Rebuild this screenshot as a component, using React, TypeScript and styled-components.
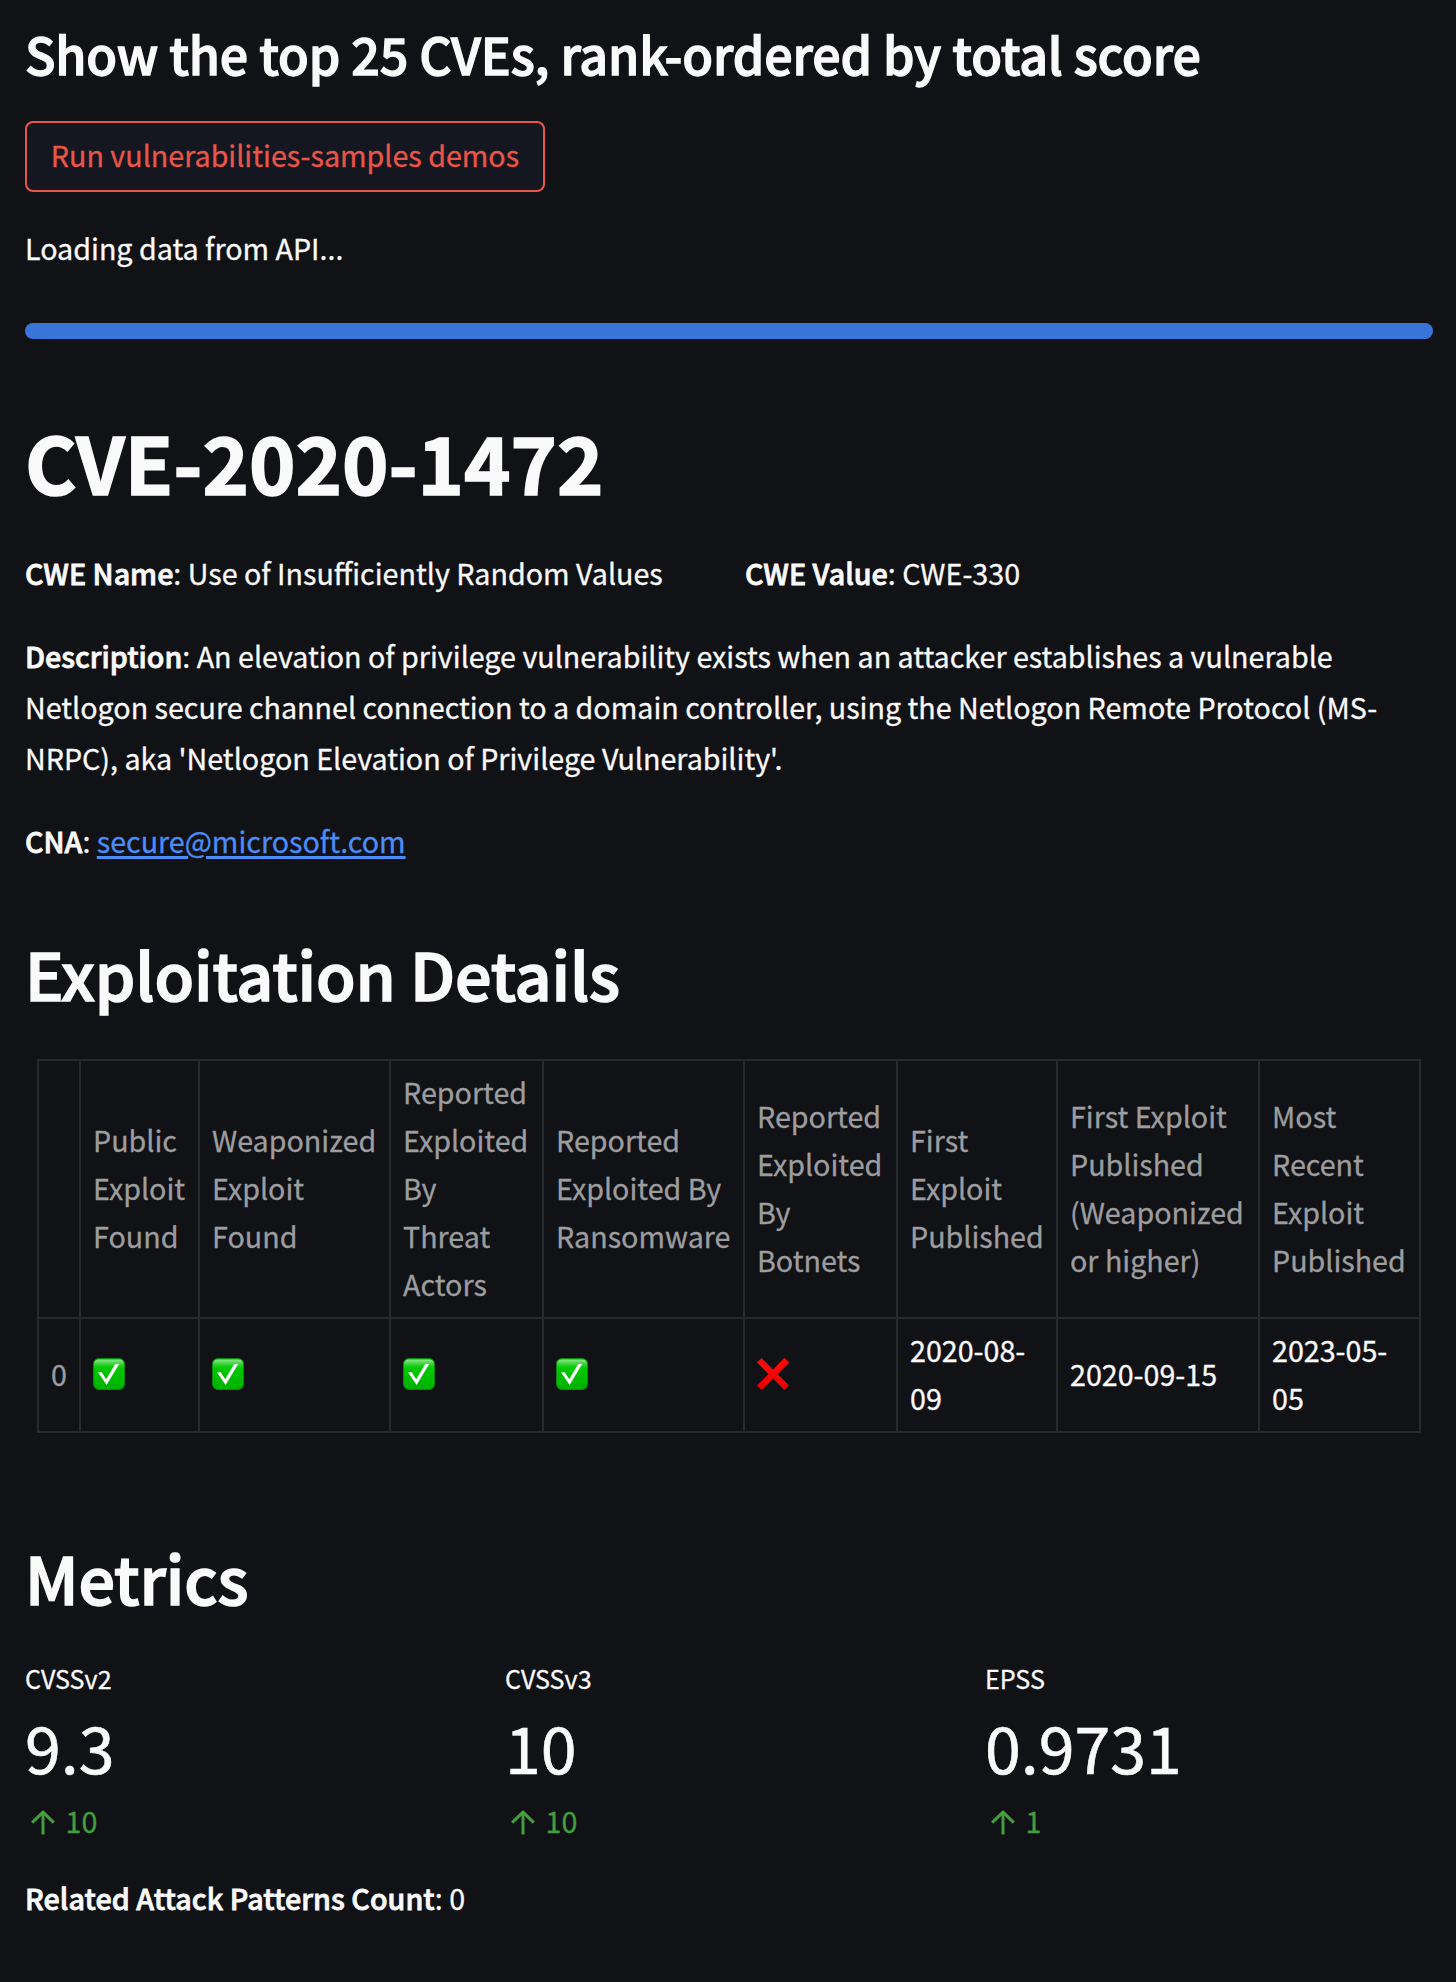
import React from 'react';
import styled, { createGlobalStyle } from 'styled-components';

const color = {
  background: '#111216',
  surface: '#14171f',
  text: '#fafafa',
  faded: '#9d9d9f',
  line: '#28292d',
  primary: '#ea5549',
  bar: '#3975d8',
  link: '#4b8df8',
  up: '#439f3e',
};

const GlobalStyle = createGlobalStyle`
  *, *::before, *::after { box-sizing: border-box; }
  body {
    margin: 0;
    background: ${color.background};
    color: ${color.text};
    font-family: "Noto Sans CJK SC", "Noto Sans", sans-serif;
    font-size: 28.67px;
    line-height: 51.2px;
    -webkit-text-stroke-width: 0.3px;
  }
`;

const Page = styled.main`
  display: flex;
  flex-direction: column;
  width: 1456px;
  min-height: 1982px;
  padding: 20px 23px 0 25px;
`;

const PageHeading = styled.h3`
  margin: 0 0 34px;
  font-size: 50.15px;
  font-weight: 500;
  line-height: 67px;
  letter-spacing: -0.165px;
  -webkit-text-stroke-width: 1.3px;
`;

const RunButton = styled.button`
  align-self: flex-start;
  width: 520px;
  height: 71px;
  padding: 6px 0 10px;
  border: 2px solid ${color.primary};
  border-radius: 8px;
  background: ${color.surface};
  color: ${color.primary};
  font: inherit;
  line-height: 51px;
  white-space: nowrap;
`;

const Paragraph = styled.p<{ $top?: number }>`
  margin: ${({ $top = 0 }) => $top}px 0 0;
`;

const Label = styled.strong<{ $tracking?: number }>`
  font-weight: 500;
  letter-spacing: ${({ $tracking = 0 }) => $tracking}px;
  -webkit-text-stroke-width: 0.8px;
`;

const ProgressTrack = styled.div`
  height: 16px;
  margin-top: 50px;
  border-radius: 8px;
  background: ${color.bar};
`;

const Title = styled.h1`
  margin: 69px 0 33px;
  font-size: 78.8px;
  font-weight: 700;
  line-height: 106px;
  -webkit-text-stroke-width: 1.6px;
`;

const SectionHeading = styled.h2<{ $top: number; $bottom: number }>`
  margin: ${({ $top }) => $top}px 0 ${({ $bottom }) => $bottom}px;
  font-size: 64.5px;
  font-weight: 500;
  line-height: 86px;
  letter-spacing: -0.13px;
  -webkit-text-stroke-width: 1.6px;
`;

const Columns = styled.div<{ $count: number }>`
  display: grid;
  grid-template-columns: repeat(${({ $count }) => $count}, 1fr);
  column-gap: 32px;
`;

const MailLink = styled.a`
  color: ${color.link};
  text-decoration: underline;
  text-decoration-thickness: 2.5px;
  text-underline-offset: 3px;
`;

const Table = styled.table`
  width: 1384px;
  margin: 0 12px;
  border-collapse: collapse;
  table-layout: fixed;
  line-height: 48px;
`;

const Cell = styled.td`
  padding: 7px 0 9px 12px;
  border: 2px solid ${color.line};
  font-weight: 400;
  text-align: left;
  vertical-align: middle;
  white-space: nowrap;
`;

const HeadCell = styled(Cell)`
  color: ${color.faded};
`;

const CellIcon = styled.svg`
  display: block;
  width: 32px;
  height: 32px;
`;

const MetricLabel = styled.div`
  font-size: 25.08px;
  line-height: 42px;
`;

const MetricValue = styled.div`
  font-size: 64.5px;
  line-height: 94px;
  -webkit-text-stroke-width: 0.6px;
`;

const MetricDelta = styled.div`
  display: flex;
  align-items: center;
  gap: 10.5px;
  margin-top: 4px;
  padding-left: 6px;
  color: ${color.up};
  line-height: 48px;
`;

const ArrowIcon = styled.svg`
  width: 24px;
  height: 25px;
  margin-top: 2px;
`;

const Found = () => (
  <CellIcon viewBox="0 0 32 32" aria-label="yes">
    <defs>
      <linearGradient id="box" x1="0" y1="0" x2="0" y2="1">
        <stop offset="0" stopColor="#1fa91f" />
        <stop offset="0.06" stopColor="#7be57b" />
        <stop offset="0.22" stopColor="#1fd01f" />
        <stop offset="0.32" stopColor="#00c800" />
        <stop offset="1" stopColor="#00b000" />
      </linearGradient>
    </defs>
    <rect x="0.5" y="0.5" width="31" height="31" rx="5.5" fill="url(#box)" stroke="#078a0c" />
    <path d="M5 14.3H8.8L13.2 21.2L22.2 6H26.2L13.6 27Z" fill="#fff" />
  </CellIcon>
);

const NotFound = () => (
  <CellIcon viewBox="0 0 32 32" aria-label="no">
    <defs>
      <linearGradient id="cross" x1="0" y1="0" x2="0" y2="1">
        <stop offset="0" stopColor="#ff0a0a" />
        <stop offset="1" stopColor="#e60000" />
      </linearGradient>
    </defs>
    <path
      d="M4.6 0L16 11.4L27.4 0L32 4.6L20.6 16L32 27.4L27.4 32L16 20.6L4.6 32L0 27.4L11.4 16L0 4.6Z"
      fill="url(#cross)"
    />
  </CellIcon>
);

const columns: { width: number; head: string[]; value: React.ReactNode[] }[] = [
  { width: 119, head: ['Public', 'Exploit', 'Found'], value: [<Found />] },
  { width: 191, head: ['Weaponized', 'Exploit', 'Found'], value: [<Found />] },
  { width: 153, head: ['Reported', 'Exploited', 'By', 'Threat', 'Actors'], value: [<Found />] },
  { width: 201, head: ['Reported', 'Exploited By', 'Ransomware'], value: [<Found />] },
  { width: 153, head: ['Reported', 'Exploited', 'By', 'Botnets'], value: [<NotFound />] },
  { width: 160, head: ['First', 'Exploit', 'Published'], value: ['2020-08-', '09'] },
  { width: 202, head: ['First Exploit', 'Published', '(Weaponized', 'or higher)'], value: ['2020-09-15'] },
  { width: 161, head: ['Most', 'Recent', 'Exploit', 'Published'], value: ['2023-05-', '05'] },
];

const metrics = [
  { label: 'CVSSv2', value: '9.3', delta: '10' },
  { label: 'CVSSv3', value: '10', delta: '10' },
  { label: 'EPSS', value: '0.9731', delta: '1' },
];

const Lines = ({ items }: { items: React.ReactNode[] }) => (
  <>
    {items.map((item, i) => (
      <React.Fragment key={i}>
        {i > 0 && <br />}
        {item}
      </React.Fragment>
    ))}
  </>
);

export default function App() {
  return (
    <Page>
      <GlobalStyle />
      <PageHeading>Show the top 25 CVEs, rank-ordered by total score</PageHeading>
      <RunButton>Run vulnerabilities-samples demos</RunButton>
      <Paragraph $top={30}>Loading data from API...</Paragraph>
      <ProgressTrack />

      <Title>CVE-2020-1472</Title>
      <Columns $count={2}>
        <Paragraph>
          <Label>CWE Name</Label>: Use of Insufficiently Random Values
        </Paragraph>
        <Paragraph>
          <Label>CWE Value</Label>: CWE-330
        </Paragraph>
      </Columns>
      <Paragraph $top={31.5}>
        <Label>Description</Label>: An elevation of privilege vulnerability exists when an attacker
        establishes a vulnerable Netlogon secure channel connection to a domain controller, using the
        Netlogon Remote Protocol (MS-NRPC), aka 'Netlogon Elevation of Privilege Vulnerability'.
      </Paragraph>
      <Paragraph $top={31.5}>
        <Label>CNA</Label>: <MailLink href="mailto:secure@microsoft.com">secure@microsoft.com</MailLink>
      </Paragraph>

      <SectionHeading $top={64} $bottom={43}>
        Exploitation Details
      </SectionHeading>
      <Table>
        <colgroup>
          <col width={42} />
          {columns.map((c, i) => (
            <col key={i} width={c.width} />
          ))}
        </colgroup>
        <thead>
          <tr>
            <HeadCell as="th" />
            {columns.map((c, i) => (
              <HeadCell as="th" key={i}>
                <Lines items={c.head} />
              </HeadCell>
            ))}
          </tr>
        </thead>
        <tbody>
          <tr>
            <HeadCell as="th">0</HeadCell>
            {columns.map((c, i) => (
              <Cell key={i}>
                <Lines items={c.value} />
              </Cell>
            ))}
          </tr>
        </tbody>
      </Table>

      <SectionHeading $top={101} $bottom={37}>
        Metrics
      </SectionHeading>
      <Columns $count={3}>
        {metrics.map((m) => (
          <div key={m.label}>
            <MetricLabel>{m.label}</MetricLabel>
            <MetricValue>{m.value}</MetricValue>
            <MetricDelta>
              <ArrowIcon viewBox="0 0 24 25" fill="none" stroke="currentColor" strokeWidth="3">
                <path d="M12 24.5V2.5M1.2 12.6L12 2.2L22.8 12.6" />
              </ArrowIcon>
              {m.delta}
            </MetricDelta>
          </div>
        ))}
      </Columns>
      <Paragraph $top={27}>
        <Label $tracking={0.07}>Related Attack Patterns Count</Label>: 0
      </Paragraph>
    </Page>
  );
}
